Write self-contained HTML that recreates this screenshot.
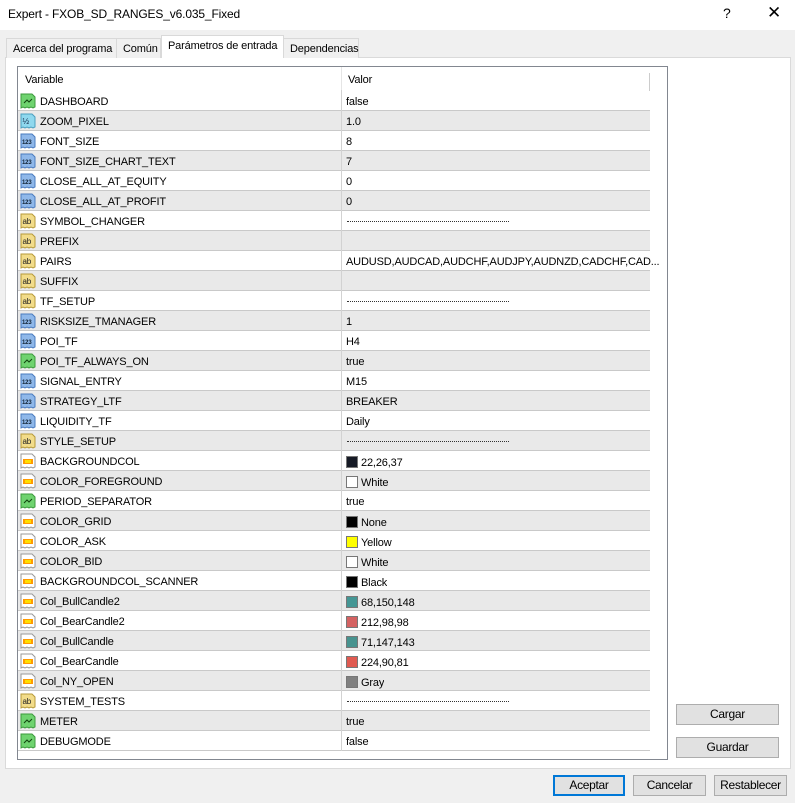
<!DOCTYPE html>
<html><head><meta charset="utf-8">
<style>
*{box-sizing:border-box;margin:0;padding:0}
body{width:795px;height:803px;background:#f0f0f0;font-family:"Liberation Sans",sans-serif;font-size:11px;letter-spacing:-0.15px;color:#000;position:relative;overflow:hidden}
.abs{position:absolute}
.title{left:0;top:0;width:795px;height:30px;background:#fff}
.tab{position:absolute;top:38px;height:20px;border:1px solid #d9d9d9;border-bottom:none;background:#f0f0f0;padding:4px 0 0 6px;white-space:nowrap}
.tab.act{top:35px;height:23px;background:#fff;padding-top:4px}
.panel{left:5px;top:57px;width:786px;height:712px;background:#fff;border:1px solid #dadada}
.tbl{left:17px;top:66px;width:651px;height:694px;border:1px solid #828790;background:#fff;overflow:hidden}
.row{position:absolute;left:0;width:632px;height:20px;border-bottom:1px solid #c9c9c9}
.row.g{background:#e9e9e9}
.row .n{position:absolute;left:22px;top:5px;white-space:nowrap}
.row .v{position:absolute;left:328px;top:5px;white-space:nowrap;max-width:318px;overflow:hidden}
.row .sep{position:absolute;left:323px;top:-1px;height:21px;border-left:1px solid #d2d2d2}
.ic{position:absolute;left:2px;top:2px;width:16px;height:16px}
.sw{display:inline-block;width:12px;height:12px;border:1px solid #777;vertical-align:-2px;margin-right:3px}
.dash{display:inline-block;width:162px;border-top:1px dotted #333;vertical-align:3px;margin-left:1px}
.btn{position:absolute;height:21px;border:1px solid #adadad;background:#e1e1e1;text-align:center;line-height:19px;font-size:12px;letter-spacing:-0.3px}
</style></head><body>
<div class="abs title"></div>
<div class="abs" style="left:8px;top:7px;font-size:12px">Expert - FXOB_SD_RANGES_v6.035_Fixed</div>
<div class="abs" style="left:723px;top:5px;font-size:14px">?</div>
<div class="abs" style="left:767px;top:3px;font-size:17px">✕</div>
<div class="abs panel"></div>
<div class="tab" style="left:6px;width:111px">Acerca del programa</div>
<div class="tab" style="left:116px;width:45px">Común</div>
<div class="tab" style="left:283px;width:76px">Dependencias</div>
<div class="tab act" style="left:161px;width:123px;border-color:#d9d9d9">Parámetros de entrada</div>
<div class="abs tbl">
<div class="abs" style="left:0;top:0;width:632px;height:24px;background:#fff"></div>
<div class="abs" style="left:7px;top:7px">Variable</div>
<div class="abs" style="left:330px;top:7px">Valor</div>
<div class="abs" style="left:323px;top:0;height:24px;border-left:1px solid #e5e5e5"></div>
<div class="abs" style="left:631px;top:6px;height:18px;border-left:1px solid #ccc"></div>
<div id="rows"></div>
</div>
<div class="btn" style="left:676px;top:704px;width:103px">Cargar</div>
<div class="btn" style="left:676px;top:737px;width:103px">Guardar</div>
<div class="btn" style="left:553px;top:775px;width:72px;border:2px solid #0078d7;line-height:17px">Aceptar</div>
<div class="btn" style="left:633px;top:775px;width:73px">Cancelar</div>
<div class="btn" style="left:714px;top:775px;width:73px">Restablecer</div>
<script>
var P='<path d="M1 1h11l3 3v10l-2 1-2-1-2 1-2-1-2 1-2-1-2 1z" ';
var B='<svg class="ic" viewBox="0 0 16 16">'+P+'fill="#6fd36f" stroke="#3c9a3c"/><path d="M4 10l3-3 2 2 3-3" stroke="#114411" fill="none"/></svg>';
var D='<svg class="ic" viewBox="0 0 16 16">'+P+'fill="#8fd8ee" stroke="#4b9fbf"/><text x="2.5" y="11" font-size="8" font-family="Liberation Sans" fill="#124">½</text></svg>';
var I='<svg class="ic" viewBox="0 0 16 16">'+P+'fill="#8fb8ea" stroke="#4a7bbf"/><text x="2" y="11" font-size="6" font-weight="bold" font-family="Liberation Sans" fill="#123">123</text></svg>';
var S='<svg class="ic" viewBox="0 0 16 16">'+P+'fill="#f2dc8a" stroke="#b79a3a"/><text x="2.5" y="11" font-size="8" font-family="Liberation Sans" fill="#222">ab</text></svg>';
var C='<svg class="ic" viewBox="0 0 16 16">'+P+'fill="#fff" stroke="#999"/><rect x="3" y="6" width="10" height="5" fill="#ff9a00"/><rect x="5" y="7" width="6" height="3" fill="#ffe000"/></svg>';
var dash='<span class="dash"></span>';
function sw(c,t){return '<span class="sw" style="background:'+c+'"></span>'+t}
var r=[[B,'DASHBOARD','false'],[D,'ZOOM_PIXEL','1.0'],[I,'FONT_SIZE','8'],[I,'FONT_SIZE_CHART_TEXT','7'],[I,'CLOSE_ALL_AT_EQUITY','0'],[I,'CLOSE_ALL_AT_PROFIT','0'],[S,'SYMBOL_CHANGER',dash],[S,'PREFIX',''],[S,'PAIRS','AUDUSD,AUDCAD,AUDCHF,AUDJPY,AUDNZD,CADCHF,CAD...'],[S,'SUFFIX',''],[S,'TF_SETUP',dash],[I,'RISKSIZE_TMANAGER','1'],[I,'POI_TF','H4'],[B,'POI_TF_ALWAYS_ON','true'],[I,'SIGNAL_ENTRY','M15'],[I,'STRATEGY_LTF','BREAKER'],[I,'LIQUIDITY_TF','Daily'],[S,'STYLE_SETUP',dash],[C,'BACKGROUNDCOL',sw('#161a25','22,26,37')],[C,'COLOR_FOREGROUND',sw('#fff','White')],[B,'PERIOD_SEPARATOR','true'],[C,'COLOR_GRID',sw('#000','None')],[C,'COLOR_ASK',sw('#ff0','Yellow')],[C,'COLOR_BID',sw('#fff','White')],[C,'BACKGROUNDCOL_SCANNER',sw('#000','Black')],[C,'Col_BullCandle2',sw('#449694','68,150,148')],[C,'Col_BearCandle2',sw('#d46262','212,98,98')],[C,'Col_BullCandle',sw('#47938f','71,147,143')],[C,'Col_BearCandle',sw('#e05a51','224,90,81')],[C,'Col_NY_OPEN',sw('#808080','Gray')],[S,'SYSTEM_TESTS',dash],[B,'METER','true'],[B,'DEBUGMODE','false']];
var h='';
for(var i=0;i<r.length;i++){h+='<div class="row'+(i%2?' g':'')+'" style="top:'+(24+i*20)+'px">'+r[i][0]+'<span class="n">'+r[i][1]+'</span><span class="sep"></span><span class="v">'+r[i][2]+'</span></div>';}
document.getElementById('rows').innerHTML=h;
</script>
</body></html>
